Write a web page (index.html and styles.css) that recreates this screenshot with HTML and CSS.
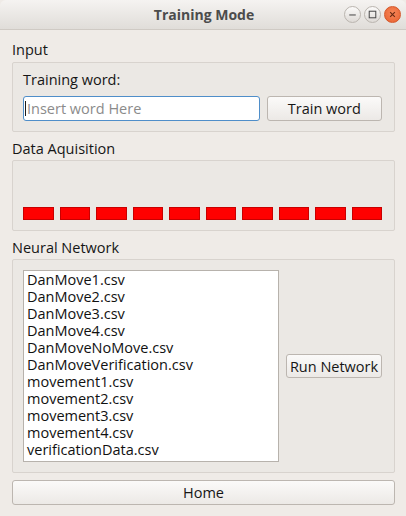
FILE: index.html
```html
<!DOCTYPE html>
<html>
<head>
<meta charset="utf-8">
<link rel="stylesheet" href="styles.css">
</head>
<body>
<div class="window">
  <header class="titlebar">
    <span class="title">Training Mode</span>
    <div class="wm-buttons">
      <span class="wm-btn"><svg width="16" height="16" viewBox="0 0 16 16"><path d="M4.5 8.5h7" stroke="#4a4a4a" stroke-width="1.1"/></svg></span>
      <span class="wm-btn"><svg width="16" height="16" viewBox="0 0 16 16"><rect x="4.5" y="4.5" width="7" height="7" fill="none" stroke="#4a4a4a" stroke-width="1.1"/></svg></span>
      <span class="wm-btn close"><svg width="16" height="16" viewBox="0 0 16 16"><path d="M5.5 5.5l5 5M10.5 5.5l-5 5" stroke="#6a2a12" stroke-width="1.2"/></svg></span>
    </div>
  </header>
  <main class="content">
    <div class="section-label">Input</div>
    <section class="group group-input">
      <div class="field-label">Training word:</div>
      <div class="input-row">
        <div class="input-wrap">
          <input class="text-input" type="text" placeholder="Insert word Here">
          <span class="caret"></span>
        </div>
        <button class="btn train-btn">Train word</button>
      </div>
    </section>

    <div class="section-label label-gap">Data Aquisition</div>
    <section class="group group-data">
      <div class="bars">
        <span class="bar"></span><span class="bar"></span><span class="bar"></span><span class="bar"></span><span class="bar"></span>
        <span class="bar"></span><span class="bar"></span><span class="bar"></span><span class="bar"></span><span class="bar"></span>
      </div>
    </section>

    <div class="section-label label-gap">Neural Network</div>
    <section class="group group-nn">
      <ul class="file-list">
        <li>DanMove1.csv</li>
        <li>DanMove2.csv</li>
        <li>DanMove3.csv</li>
        <li>DanMove4.csv</li>
        <li>DanMoveNoMove.csv</li>
        <li>DanMoveVerification.csv</li>
        <li>movement1.csv</li>
        <li>movement2.csv</li>
        <li>movement3.csv</li>
        <li>movement4.csv</li>
        <li>verificationData.csv</li>
      </ul>
      <button class="btn run-btn">Run Network</button>
    </section>

    <button class="btn home-btn">Home</button>
  </main>
</div>
</body>
</html>
```
FILE: styles.css
```css
* { box-sizing: border-box; }
html, body {
  margin: 0;
  padding: 0;
  width: 406px;
  height: 516px;
  overflow: hidden;
  background: #efebe7;
  font-family: "Open Sans", "Noto Sans", sans-serif;
  font-size: 14.5px;
  color: #161616;
}
.window {
  width: 406px;
  height: 516px;
  display: flex;
  flex-direction: column;
}
.titlebar {
  position: relative;
  height: 30px;
  flex: 0 0 30px;
  background: linear-gradient(#f5f3f1, #e0ddd9);
  border-bottom: 1px solid #cfcac4;
  border-radius: 6px 6px 0 0;
  display: flex;
  align-items: center;
  justify-content: center;
}
.title {
  font-weight: bold;
  font-size: 14px;
  color: #4c4c4c;
  margin-left: 2px;
}
.wm-buttons {
  position: absolute;
  right: 5px;
  top: 6px;
  display: flex;
  gap: 3px;
}
.wm-btn {
  width: 17px;
  height: 17px;
  border-radius: 50%;
  border: 1px solid #bab5af;
  background: linear-gradient(#fbfaf9, #dedad6);
  display: flex;
  align-items: center;
  justify-content: center;
}
.wm-btn svg { width: 15px; height: 15px; }
.wm-btn.close {
  border-color: #d4572a;
  background: radial-gradient(circle at 50% 40%, #f5875a, #e9602e);
}
.content {
  flex: 1;
  padding: 10px 11px 0 12px;
  display: flex;
  flex-direction: column;
}
.section-label {
  height: 20px;
  line-height: 20px;
  margin-bottom: 2px;
}
.label-gap { margin-top: 7px; margin-bottom: 1px; }
.group {
  border: 1px solid #d8d3ce;
  border-radius: 2px;
  background: #ebe8e4;
}
.group-input {
  height: 70px;
  padding: 7px 12px 0 10px;
}
.field-label {
  height: 20px;
  line-height: 20px;
  margin-bottom: 6px;
}
.input-row {
  display: flex;
  gap: 7px;
  height: 25px;
}
.input-wrap {
  position: relative;
  width: 238px;
  height: 25px;
}
.text-input {
  width: 100%;
  height: 100%;
  border: 1px solid #4f8ec9;
  border-radius: 3px;
  background: #fff;
  font-family: inherit;
  font-size: 14.5px;
  padding: 0 3px;
  outline: none;
  color: #161616;
}
.text-input::placeholder { color: #8b8b8b; }
.caret {
  position: absolute;
  left: 2px;
  top: 5px;
  width: 1px;
  height: 15px;
  background: #1c1c1c;
}
.btn {
  font-family: inherit;
  font-size: 14.5px;
  color: #161616;
  border: 1px solid #bcb6b0;
  border-radius: 3px;
  background: linear-gradient(#fbfaf9, #ece9e6);
  padding: 0;
}
.train-btn { width: 116px; height: 25px; }
.group-data {
  height: 71px;
  padding: 0 12px 10px 10px;
  display: flex;
  align-items: flex-end;
}
.bars {
  display: flex;
  gap: 6px;
  width: 100%;
}
.bar {
  flex: 1;
  height: 13px;
  background: #ff0000;
  border: 1px solid #c80000;
}
.group-nn {
  height: 214px;
  padding: 10px 12px 10px 10px;
  display: flex;
  align-items: center;
  gap: 7px;
}
.file-list {
  list-style: none;
  margin: 0;
  width: 256px;
  height: 192px;
  flex: 0 0 256px;
  background: #fff;
  border: 1px solid #b7b2ac;
  padding: 0 0 0 3px;
}
.file-list li {
  height: 17px;
  line-height: 17px;
  color: #111;
}
.run-btn { width: 98px; height: 24px; }
.home-btn {
  margin-top: 7px;
  height: 25px;
  width: 383px;
}
```
